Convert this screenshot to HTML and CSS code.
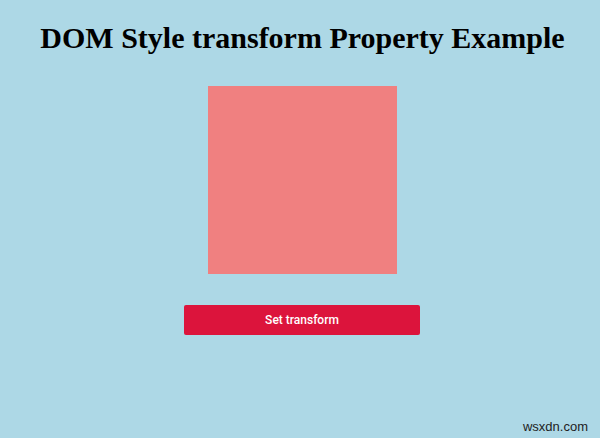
FILE: index.html
```html
<!DOCTYPE html>
<html>
<head>
<meta charset="utf-8">
<link rel="stylesheet" href="styles.css">
</head>
<body>
<div class="page">
  <h1 class="title">DOM Style transform Property Example</h1>
  <div class="stage">
    <div class="box"></div>
  </div>
  <div class="actions">
    <button class="btn">Set transform</button>
  </div>
  <div class="watermark">wsxdn.com</div>
</div>
</body>
</html>
```
FILE: styles.css
```css
html, body {
  margin: 0;
  padding: 0;
  background: #add8e6;
}
.page {
  width: 600px;
  height: 438px;
  position: relative;
  display: flex;
  flex-direction: column;
  overflow: hidden;
}
.title {
  margin: 21px 0 0 0;
  padding-left: 5px;
  text-align: center;
  font-family: "Liberation Serif", serif;
  font-weight: bold;
  font-size: 30px;
  line-height: 34px;
  color: #000;
  white-space: nowrap;
}
.stage {
  display: flex;
  justify-content: center;
  margin-top: 31px;
  padding-left: 5px;
}
.box {
  width: 189px;
  height: 188px;
  background: #f08080;
}
.actions {
  display: flex;
  justify-content: center;
  margin-top: 31px;
  padding-left: 4px;
}
.btn {
  width: 236px;
  height: 30px;
  border: none;
  border-radius: 2px;
  background: #dc143c;
  color: #fff;
  font-family: Roboto, "Liberation Sans", sans-serif;
  font-weight: 500;
  font-size: 12px;
  padding: 0;
}
.watermark {
  position: absolute;
  right: 12px;
  bottom: 4px;
  font-family: "Liberation Sans", sans-serif;
  font-size: 13px;
  color: #222;
}
```
